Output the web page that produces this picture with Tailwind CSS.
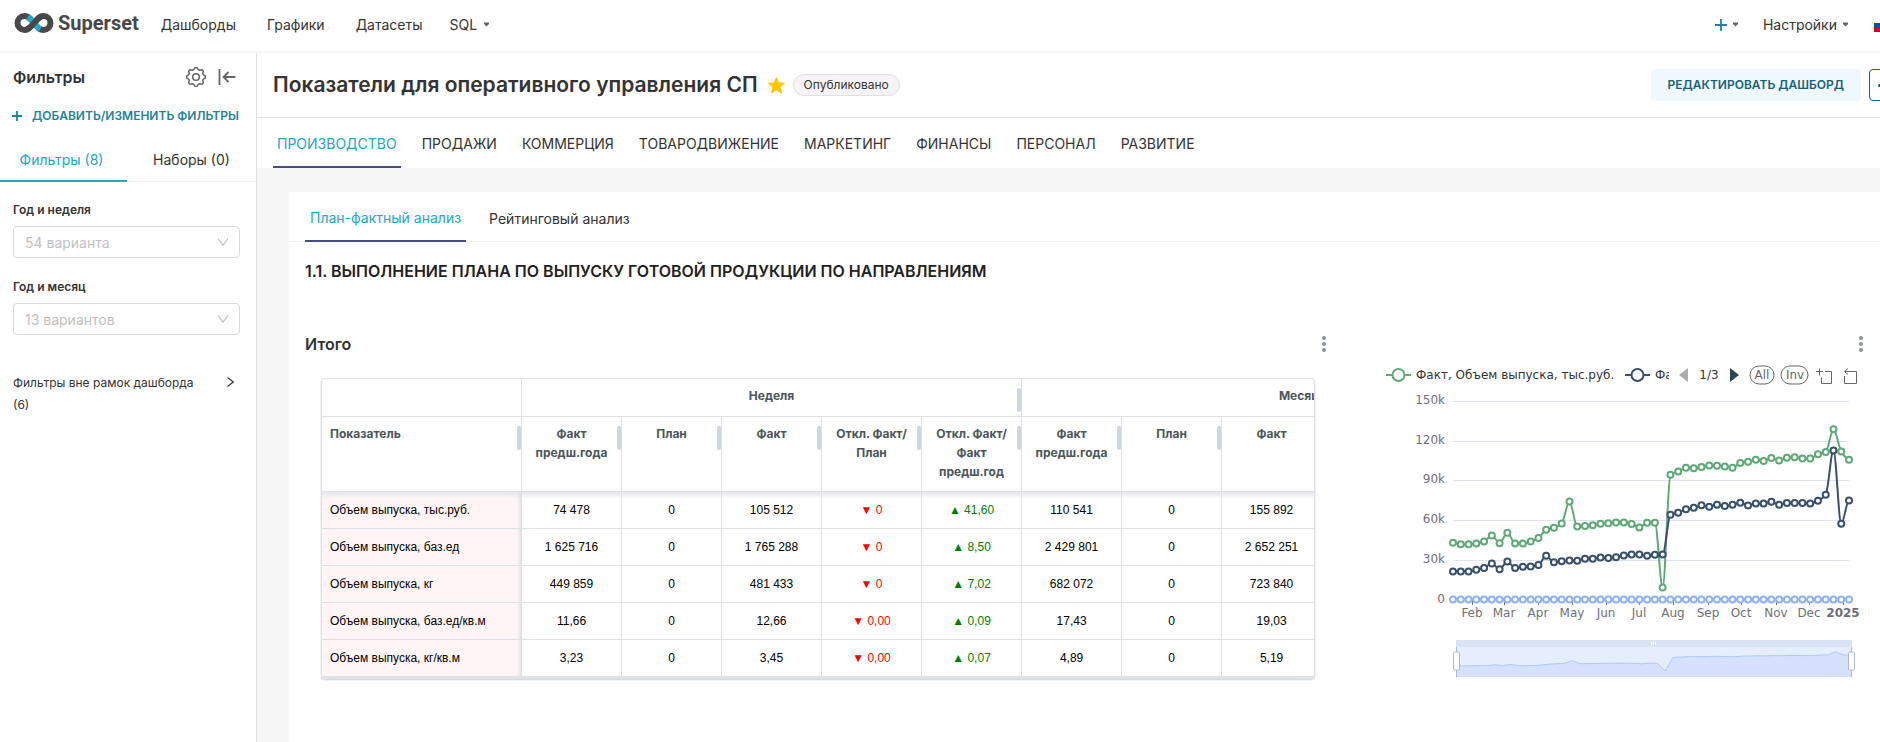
<!DOCTYPE html>
<html lang="ru">
<head>
<meta charset="utf-8">
<title>Показатели для оперативного управления СП</title>
<script src="https://cdn.jsdelivr.net/npm/@tailwindcss/browser@4"></script>
</head>
<body class="flex min-h-screen flex-col overflow-x-hidden bg-white font-['Inter',sans-serif] text-sm text-[#333]">

<header class="-mr-4 flex h-[53px] shrink-0 items-center border-b-2 border-[#f7f7f7] pb-0.5 pl-[13px]">
  <a href="#" class="-mt-1 flex items-center gap-[3px] text-[#484848]" aria-label="Superset">
    <svg class="h-[22px] w-[42px]" viewBox="0 0 42 22" fill="none" stroke-width="6">
      <path d="M21 11C17 6 15 4 11.500 4a7 7 0 0 0 0 14C15 18 17 16 21 11S27 4 30.500 4a7 7 0 0 1 0 14C27 18 25 16 21 11" stroke="#484848"/>
      <path d="M14.800 4.800Q17.500 6.500 21 11Q24.500 15.500 27.200 17.200" stroke="#20a7c9"/>
      <path d="M13.500 17.700Q17 16 21 11Q25 6 28.500 4.300" stroke="#484848"/>
    </svg>
    <span class="font-['Roboto',sans-serif] text-xl font-bold leading-6">Superset</span>
  </a>
  <nav class="ml-[22px] flex items-center gap-[31px]">
    <a href="#">Дашборды</a>
    <a href="#">Графики</a>
    <a href="#">Датасеты</a>
    <button class="-ml-1 flex items-center gap-[7px]">SQL <svg class="size-[5px]" viewBox="0 0 5 4"><path d="M0 0h5v1.500L2.500 4 0 1.500z" fill="#666"/></svg></button>
  </nav>
  <div class="ml-auto flex items-center">
    <button class="flex items-center gap-1.5" aria-label="Создать">
      <svg class="size-3" viewBox="0 0 12 12" stroke="#1a85a0" stroke-width="1.800"><path d="M6 0v12M0 6h12"/></svg>
      <svg class="size-[5px]" viewBox="0 0 5 4"><path d="M0 0h5v1.500L2.500 4 0 1.500z" fill="#666"/></svg>
    </button>
    <button class="ml-[25px] flex items-center gap-1.5">Настройки <svg class="size-[5px]" viewBox="0 0 5 4"><path d="M0 0h5v1.500L2.500 4 0 1.500z" fill="#666"/></svg></button>
    <button class="ml-[26px]" aria-label="Русский">
      <svg class="h-3.5 w-[22px]" viewBox="0 0 22 14"><path fill="#fff" d="M0 0h22v5H0z"/><path fill="#0052b4" d="M0 5h22v5H0z"/><path fill="#d80027" d="M0 10h22v4H0z"/></svg>
    </button>
  </div>
</header>

<div class="flex flex-1">
  <aside class="w-[257px] shrink-0 border-r border-[#e0e0e0]">
    <div class="flex h-12 items-center pl-[13px] pr-5">
      <h2 class="text-base font-semibold">Фильтры</h2>
      <button class="ml-auto" aria-label="Настройки фильтров">
        <svg class="size-5" viewBox="0 0 20 20" fill="none" stroke="#666" stroke-width="1.500" stroke-linejoin="round"><path id="gear"/><circle cx="10" cy="10" r="3.300"/></svg>
      </button>
      <button class="ml-3" aria-label="Свернуть">
        <svg class="h-4 w-[18px]" viewBox="0 0 18 16" fill="none" stroke="#666" stroke-width="1.800"><path d="M1.500 0v16M17.500 8H6M10.500 3L5.500 8l5 5"/></svg>
      </button>
    </div>
    <button class="flex h-[30px] items-center gap-2.5 pl-3 text-xs font-semibold text-[#1a85a0]">
      <svg class="size-2.5" viewBox="0 0 10 10" stroke="#1a85a0" stroke-width="1.800"><path d="M5 0v10M0 5h10"/></svg>
      ДОБАВИТЬ/ИЗМЕНИТЬ ФИЛЬТРЫ
    </button>
    <div class="mt-2 flex h-[43px] border-b border-[#f0f0f0]" role="tablist">
      <button role="tab" aria-selected="true" class="-mb-px w-[127px] border-b-2 border-[#20a7c9] pr-1 text-[#20a7c9]">Фильтры (8)</button>
      <button role="tab" aria-selected="false" class="-mb-px flex-1 border-b-2 border-transparent">Наборы (0)</button>
    </div>
    <div class="pl-[13px] pr-4 pt-[17px]">
      <label for="week" class="block text-xs font-semibold leading-[22px]">Год и неделя</label>
      <div class="relative mt-[5px]">
        <select id="week" class="h-8 w-full appearance-none rounded-sm border border-[#d9d9d9] bg-white pl-[11px] pt-0.5 text-sm text-[#bfbfbf]"><option>54 варианта</option></select>
        <svg class="pointer-events-none absolute right-3 top-3 h-2 w-2.5" viewBox="0 0 10 8" fill="none" stroke="#bfbfbf" stroke-width="1.200"><path d="M0 .5l5 6.500 5-6.500"/></svg>
      </div>
      <label for="month" class="mt-[18px] block text-xs font-semibold leading-[22px]">Год и месяц</label>
      <div class="relative mt-[5px]">
        <select id="month" class="h-8 w-full appearance-none rounded-sm border border-[#d9d9d9] bg-white pl-[11px] pt-0.5 text-sm text-[#bfbfbf]"><option>13 вариантов</option></select>
        <svg class="pointer-events-none absolute right-3 top-3 h-2 w-2.5" viewBox="0 0 10 8" fill="none" stroke="#bfbfbf" stroke-width="1.200"><path d="M0 .5l5 6.500 5-6.500"/></svg>
      </div>
      <button class="mt-[37px] flex w-full items-start justify-between text-left text-xs leading-[22px]">
        <span class="w-48">Фильтры вне рамок дашборда (6)</span>
        <svg class="mr-1.5 mt-[5px] h-2.5 w-[7px]" viewBox="0 0 7 10" fill="none" stroke="#333" stroke-width="1.200"><path d="M.5.500L6.300 5 .5 9.500"/></svg>
      </button>
    </div>
  </aside>

  <main class="flex min-w-0 flex-1 flex-col bg-[#f7f7f7]">
    <div class="-mr-8 flex h-[65px] shrink-0 items-center border-b border-[#e0e0e0] bg-white pl-4">
      <h1 class="text-[21px] font-semibold">Показатели для оперативного управления СП</h1>
      <button class="ml-2.5" aria-label="Избранное">
        <svg class="size-[17px]" viewBox="0 0 17 17" fill="#fcc700"><path d="M8.500.5l2.200 5.300 5.800.5-4.400 3.800 1.400 5.900-5-3.100-5 3.100 1.400-5.900L.5 6.300l5.800-.5z" stroke="#fcc700" stroke-linejoin="round"/></svg>
      </button>
      <span class="ml-2 flex h-[22px] items-center rounded-full border border-[#e0e0e0] bg-[#f7f4f7] px-2.5 text-xs">Опубликовано</span>
      <button class="ml-auto h-8 rounded bg-[#eff8ff] px-[17px] text-xs font-semibold text-[#156378]">РЕДАКТИРОВАТЬ ДАШБОРД</button>
      <button class="ml-2 mr-[11px] flex h-8 w-8 items-center justify-center gap-[3px] rounded border border-[#156378]" aria-label="Ещё">
        <i class="size-[3px] rounded-full bg-[#156378]"></i><i class="size-[3px] rounded-full bg-[#156378]"></i><i class="size-[3px] rounded-full bg-[#156378]"></i>
      </button>
    </div>

    <div class="flex h-[50px] shrink-0 items-start gap-[17px] bg-white pl-4" role="tablist">
      <button role="tab" aria-selected="true" class="h-[50px] border-b-2 border-[#444e7c] px-1 pt-1 text-[#20a7c9]">ПРОИЗВОДСТВО</button>
      <button role="tab" class="h-[50px] px-1 pt-0.5">ПРОДАЖИ</button>
      <button role="tab" class="h-[50px] px-1 pt-0.5">КОММЕРЦИЯ</button>
      <button role="tab" class="h-[50px] px-1 pt-0.5">ТОВАРОДВИЖЕНИЕ</button>
      <button role="tab" class="h-[50px] px-1 pt-0.5">МАРКЕТИНГ</button>
      <button role="tab" class="h-[50px] px-1 pt-0.5">ФИНАНСЫ</button>
      <button role="tab" class="h-[50px] px-1 pt-0.5">ПЕРСОНАЛ</button>
      <button role="tab" class="h-[50px] px-1 pt-0.5">РАЗВИТИЕ</button>
    </div>

    <section class="ml-8 mt-6 flex-1 bg-white">
      <div class="flex h-[50px] gap-[19px] border-b border-[#f0f0f0] pl-4" role="tablist">
        <button role="tab" aria-selected="true" class="-mb-px border-b-2 border-[#444e7c] px-[5px] pt-1 text-[#20a7c9]">План-фактный анализ</button>
        <button role="tab" class="px-1 pt-1">Рейтинговый анализ</button>
      </div>
      <h3 class="ml-4 mt-[17px] text-base font-semibold text-[#222]">1.1. ВЫПОЛНЕНИЕ ПЛАНА ПО ВЫПУСКУ ГОТОВОЙ ПРОДУКЦИИ ПО НАПРАВЛЕНИЯМ</h3>

      <div class="mt-[45px] flex pl-4">
        <article class="min-w-0 flex-1">
          <div class="flex h-8 items-center justify-between pr-10">
            <h4 class="text-base font-semibold">Итого</h4>
            <button aria-label="Меню графика"><svg class="h-[18px] w-1" viewBox="0 0 4 18" fill="#879399"><circle cx="2" cy="3" r="2"/><circle cx="2" cy="9" r="2"/><circle cx="2" cy="15" r="2"/></svg></button>
          </div>
          <div class="ml-4 mr-[51px] mt-[18px] overflow-hidden rounded border border-b-2 border-[#dde2e6] shadow-[0_1px_2px_#c8cfd6]">
            <table class="w-[1254px] table-fixed border-separate border-spacing-0 text-center text-xs text-black">
              <colgroup><col class="w-[200px]"><col class="w-[100px]"><col class="w-[100px]"><col class="w-[100px]"><col class="w-[100px]"><col class="w-[100px]"><col class="w-[100px]"><col class="w-[100px]"><col class="w-[100px]"><col></colgroup>
              <thead id="thead" class="align-top leading-[19px] text-[#4b565c]"></thead>
              <tbody id="tbody" class="font-['Liberation_Sans',sans-serif]"></tbody>
            </table>
          </div>
        </article>

        <article class="w-[514px] shrink-0">
          <div class="flex h-8 items-center justify-end pr-[17px]">
            <button aria-label="Меню графика"><svg class="h-[18px] w-1" viewBox="0 0 4 18" fill="#879399"><circle cx="2" cy="3" r="2"/><circle cx="2" cy="9" r="2"/><circle cx="2" cy="15" r="2"/></svg></button>
          </div>
          <svg id="chart" class="h-auto w-full font-['DejaVu_Sans',sans-serif] text-xs" viewBox="0 0 514 330" role="img" aria-label="Объем выпуска"></svg>
        </article>
      </div>
    </section>
  </main>
</div>

<script>
// Settings gear: eight rounded teeth around the centre.
const pts = [];
for (let i = 0; i < 64; i++) {
  const a = i / 64 * 2 * Math.PI, c = Math.cos(8 * a);
  const r = 8.500 + 0.900 * Math.max(-1, Math.min(1, c * 1.800));
  pts.push((10 + r * Math.sin(a)).toFixed(2) + ' ' + (10 - r * Math.cos(a)).toFixed(2));
}
document.getElementById('gear').setAttribute('d', 'M' + pts.join('L') + 'Z');

// Table
const line = 'border-[#dde2e6]';
const grip = '<span class="absolute right-0 top-[9px] h-6 w-1 rounded-sm bg-[#cdd6de]"></span>';
const th = (t, g, extra = '') => `<th scope="col" class="relative h-[75px] border-b border-r ${line} px-2 pt-[7px] font-bold ${extra}">${t}${g ? grip : ''}</th>`;
document.getElementById('thead').innerHTML =
  `<tr><td class="h-[38px] border-b border-r ${line}"></td>
   <th colspan="5" scope="colgroup" class="relative h-[38px] border-b border-r ${line} pt-[7px] font-bold">Неделя${grip}</th>
   <th colspan="4" scope="colgroup" class="h-[38px] border-b ${line} pt-[7px] font-bold">Месяц</th></tr><tr>` +
  th('Показатель', 1, 'text-left') + th('Факт предш.года', 1) + th('План', 1) + th('Факт', 1) +
  th('Откл. Факт/<br>План', 1) + th('Откл. Факт/<br>Факт<br>предш.год', 1) +
  th('Факт предш.года', 1) + th('План', 1) + th('Факт', 0) + `<td class="border-b ${line}"></td></tr>`;
const rows = [
  ['Объем выпуска, тыс.руб.', '74 478', '0', '105 512', '0', '41,60', '110 541', '0', '155 892'],
  ['Объем выпуска, баз.ед', '1 625 716', '0', '1 765 288', '0', '8,50', '2 429 801', '0', '2 652 251'],
  ['Объем выпуска, кг', '449 859', '0', '481 433', '0', '7,02', '682 072', '0', '723 840'],
  ['Объем выпуска, баз.ед/кв.м', '11,66', '0', '12,66', '0,00', '0,09', '17,43', '0', '19,03'],
  ['Объем выпуска, кг/кв.м', '3,23', '0', '3,45', '0,00', '0,07', '4,89', '0', '5,19']
];
document.getElementById('tbody').innerHTML = rows.map((r, i) => {
  const sh = i ? '' : 'bg-linear-to-b from-[#e6e6ea] to-transparent to-20%';
  return '<tr>' + r.map((t, j) => j === 0
    ? `<th scope="row" class="h-[37px] border-b border-r ${line} bg-[#fff5f6] ${sh} px-2 text-left font-normal shadow-[inset_-5px_0_4px_-4px_#ddd6da]">${t}</th>`
    : `<td class="h-[37px] border-b border-r ${line} ${sh} ${j === 4 ? 'text-[#f00]' : j === 5 ? 'text-[#008000]' : ''}">${j === 4 ? '▼ ' : j === 5 ? '▲ ' : ''}${t}</td>`
  ).join('') + `<td class="border-b ${line}"></td></tr>`;
}).join('');

// Chart, values in thousands
const green = [42.9,41.8,41.8,42.3,43.9,48.4,42.6,50.4,42.3,42.3,43.9,46.4,52.7,54.2,57.5,74.1,55.2,55.5,56.2,57.2,57.7,58.2,58.2,57,54.5,58,58,9.1,94.3,96.8,99.6,99.3,100.1,101.3,101.1,100.6,99.6,103.1,104.1,105.6,104.6,106.9,105.1,107.1,107.6,106.6,106.6,109.7,111.4,128.6,111.9,105.6];
const navy = [21.2,21.2,21.2,22.4,23.9,27.2,22.9,28.7,23.9,24.7,25,26,33,28.2,29,29.5,29.2,30.8,30.8,31.8,31.3,32,33.3,34,34,33,33.8,34,64,65.5,68.3,69.3,71.3,70.1,71.6,70.6,71.6,73.1,71.1,72.6,72.6,73.9,71.6,72.9,72.9,72.9,72.6,74.6,79.2,112.7,57.2,74.9];
const zero = green.map(() => 0);
const X = i => 87 + i * 7.765, Y = v => 239.5 - v * 1.323;
// Horizontal handles with tangents limited by the neighbours, so the curve never overshoots.
function smooth(d) {
  const m = d.map((v, i) => {
    if (i === 0 || i === d.length - 1) return 0;
    const a = v - d[i - 1], b = d[i + 1] - v;
    return a * b <= 0 ? 0 : 2 * a * b / (a + b);
  });
  let p = `M${X(0)} ${Y(d[0])}`;
  for (let i = 1; i < d.length; i++)
    p += `C${X(i - 2 / 3)} ${Y(d[i - 1] + m[i - 1] / 3)} ${X(i - 1 / 3)} ${Y(d[i] - m[i] / 3)} ${X(i)} ${Y(d[i])}`;
  return p;
}
let s = '';
[0, 30, 60, 90, 120, 150].forEach(v => {
  s += `<path d="M87 ${Math.round(Y(v)) + .5}H483" stroke="#e0e2f1"/><text x="79" y="${Math.round(Y(v)) + 3}" text-anchor="end" fill="#6e7079">${v ? v + 'k' : 0}</text>`;
});
[['Feb', 106], ['Mar', 138], ['Apr', 172], ['May', 206], ['Jun', 240], ['Jul', 273], ['Aug', 307], ['Sep', 342], ['Oct', 375], ['Nov', 410], ['Dec', 443], ['2025', 477]].forEach(([t, x]) => {
  s += `<path d="M${x + .5} 240v5" stroke="#6e7079"/><text x="${x}" y="257" text-anchor="middle" fill="#6e7079" ${t === '2025' ? 'font-weight="bold"' : ''}>${t}</text>`;
});
[[green, '#5fa877'], [navy, '#38506b'], [zero, '#8fb0fb']].forEach(([d, c]) => {
  s += `<path d="${smooth(d)}" fill="none" stroke="${c}" stroke-width="2" stroke-linejoin="bevel"/>`;
  s += d.map((v, i) => `<circle cx="${X(i)}" cy="${Y(v)}" r="3" fill="#fff" stroke="${c}" stroke-width="2"/>`).join('');
});
// Legend
const key = (x, c) => `<path d="M${x} 15h25" stroke="${c}" stroke-width="2"/><circle cx="${x + 12.500}" cy="15" r="6" fill="#fff" stroke="${c}" stroke-width="2"/>`;
s += key(20, '#5fa877') + '<text x="50" y="19" fill="#333">Факт, Объем выпуска, тыс.руб.</text>';
s += key(259, '#38506b') + '<clipPath id="lc"><path d="M280 0h23v30h-23z"/></clipPath><text x="289" y="19" fill="#333" clip-path="url(#lc)">Факт</text>';
s += '<path d="M322 8v14l-9-7z" fill="#aaa"/><text x="343" y="19" text-anchor="middle" fill="#333">1/3</text><path d="M364 8v14l9-7z" fill="#2c4553"/>';
s += '<g fill="none" stroke="#666"><rect x="384" y="6" width="24" height="18" rx="9"/><rect x="415" y="6" width="27" height="18" rx="9"/></g>';
s += '<text x="396" y="19" text-anchor="middle" fill="#666">All</text><text x="429" y="19" text-anchor="middle" fill="#666">Inv</text>';
s += '<g fill="none" stroke="#666"><path d="M453.500 8.500v7M450 11.500h7M459 11.500h6.500v12h-10v-6"/><path d="M479 11.500h11.500v12h-12v-7.500M482 8.500l-3.500 3 3.500 3"/></g>';
// Zoom slider
s += '<path d="M90 280h396v37H90z" fill="#e6edfc"/><path d="M90 280h396v7H90z" fill="#dae3f6"/>';
const zl = green.map((v, i) => `${(90 + i * 7.745).toFixed(1)} ${(312.400 - v * .158).toFixed(1)}`).join('L');
s += `<path d="M${zl}V317H90z" fill="#d5e1fd"/><path d="M${zl}" fill="none" stroke="#b0c8fb"/>`;
s += '<path d="M285.500 282v3M287.500 282v3M289.500 282v3" stroke="#fff"/>';
[90.500, 485.500].forEach(x => s += `<path d="M${x} 287v30" stroke="#acb8d1"/><rect x="${x - 3}" y="292" width="6" height="18" rx="1" fill="#fff" stroke="#acb8d1"/>`);
document.getElementById('chart').innerHTML = s;
</script>
</body>
</html>
